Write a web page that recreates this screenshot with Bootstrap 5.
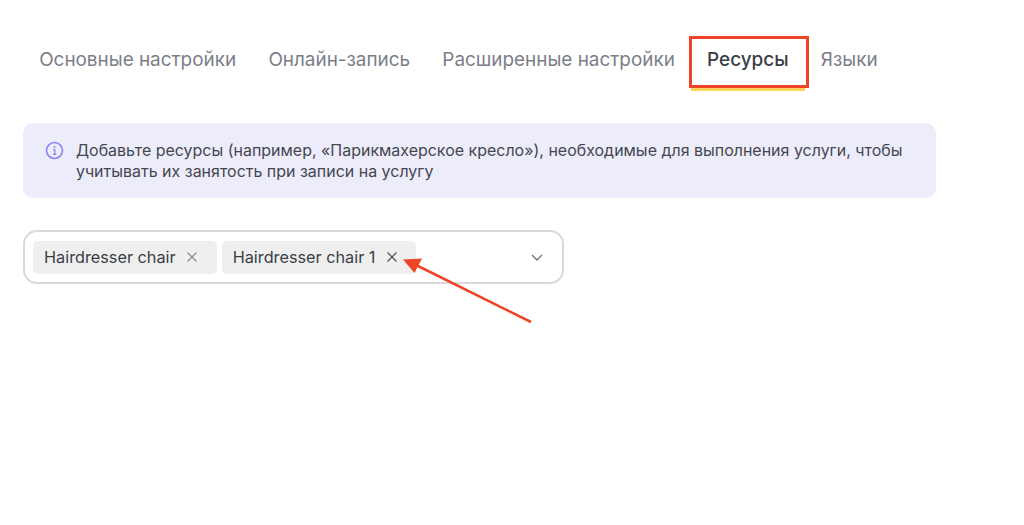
<!DOCTYPE html>
<html lang="ru">
<head>
<meta charset="utf-8">
<title>Ресурсы</title>
<link href="https://cdn.jsdelivr.net/npm/bootstrap@5.3.0/dist/css/bootstrap.min.css" rel="stylesheet">
<style>
html,body{height:100%;overflow:hidden}
body{font-family:Inter,"Liberation Sans",sans-serif;background:#fff;color:#3a3e46;position:relative}
.page-wrap{padding:36px 0 0 23px}
.tab-strip{height:55px;align-items:flex-start}
.tab-item{font-size:18.9px;line-height:24px;padding:12px 16.15px 0;height:55px;color:#7b7e89;text-decoration:none;white-space:nowrap;border-bottom:4px solid transparent}
.tab-item.is-on{color:#3a3e46;font-weight:500;border-bottom-color:#fbd25c}
.hint-box{width:913px;height:75px;margin-top:32px;background:#edecfb;border-radius:10px;padding:17px 22px;font-size:15.98px;line-height:21px;color:#44474f;gap:12px}
.hint-ico{flex:none;width:19px;height:19px;margin-top:1px}
.picker{width:541px;height:54px;margin-top:32px;border:2px solid #d9d9d9;border-radius:14px;padding:0 18px 0 8px;gap:5px}
.chip{height:33px;background:#efefef;border-radius:5px;padding:0 18.5px 0 11px;font-size:16.25px;color:#3a3e46;gap:10.5px;white-space:nowrap}
.chip svg{width:12px;height:12px}
.chevron{width:14px;height:9px}
.red-frame{position:absolute;left:689px;top:36px;width:120px;height:52px;border:3px solid #ee4526;pointer-events:none}
.red-arrow{position:absolute;left:0;top:0;pointer-events:none}
</style>
</head>
<body>
<div class="page-wrap">
  <nav class="tab-strip d-flex">
    <a class="tab-item" href="#">Основные настройки</a>
    <a class="tab-item" href="#">Онлайн-запись</a>
    <a class="tab-item" href="#">Расширенные настройки</a>
    <a class="tab-item is-on" href="#">Ресурсы</a>
    <a class="tab-item" href="#">Языки</a>
  </nav>
  <div class="hint-box d-flex">
    <svg class="hint-ico" viewBox="0 0 19 19" fill="none"><circle cx="9.5" cy="9.5" r="8" stroke="#8b85f5" stroke-width="1.6"/><circle cx="9.5" cy="5.9" r="1" fill="#8b85f5"/><path d="M8 8.6h1.8v4.6M8 13.3h3.4" stroke="#8b85f5" stroke-width="1.3"/></svg>
    <div>Добавьте ресурсы (например, «Парикмахерское кресло»), необходимые для выполнения услуги, чтобы учитывать их занятость при записи на услугу</div>
  </div>
  <div class="picker d-flex align-items-center">
    <span class="chip d-inline-flex align-items-center">Hairdresser chair
      <svg viewBox="0 0 12 12" fill="none"><path d="M1.5 1.5l9 9M10.5 1.5l-9 9" stroke="#8a8a8a" stroke-width="1.2"/></svg></span>
    <span class="chip d-inline-flex align-items-center">Hairdresser chair 1
      <svg viewBox="0 0 12 12" fill="none"><path d="M1.5 1.5l9 9M10.5 1.5l-9 9" stroke="#555" stroke-width="1.3"/></svg></span>
    <svg class="chevron ms-auto" viewBox="0 0 14 9" fill="none"><path d="M2 2l5 5 5-5" stroke="#777" stroke-width="1.4"/></svg>
  </div>
</div>
<div class="red-frame"></div>
<svg class="red-arrow" width="1024" height="525" viewBox="0 0 1024 525" fill="none">
  <path d="M531 322L416 265" stroke="#ee4526" stroke-width="2.6"/>
  <path d="M403 259.500L422 258.500L414.500 273Z" fill="#ee4526"/>
</svg>
<script src="https://cdn.jsdelivr.net/npm/bootstrap@5.3.0/dist/js/bootstrap.bundle.min.js"></script>
</body>
</html>
